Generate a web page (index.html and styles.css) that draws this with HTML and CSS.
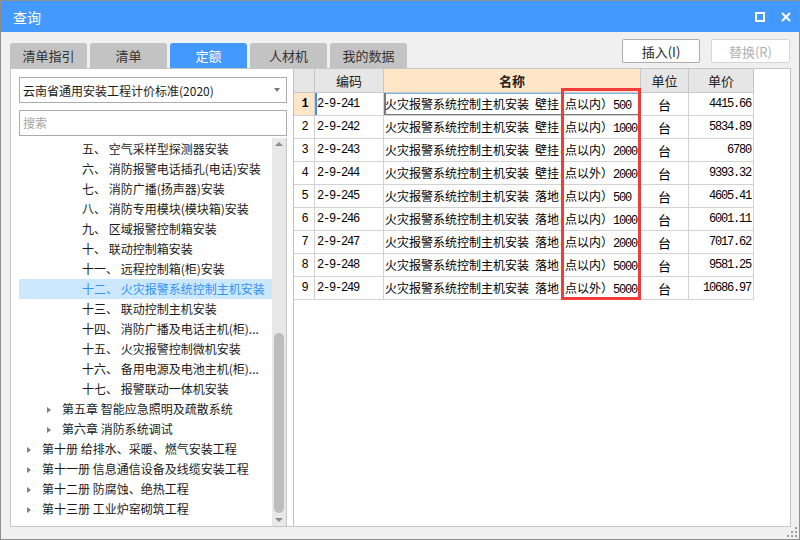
FILE: index.html
```html
<!DOCTYPE html>
<html lang="zh-CN">
<head>
<meta charset="utf-8">
<title>查询</title>
<link rel="stylesheet" href="styles.css">
</head>
<body>
<div class="window">
  <div class="titlebar">
    <span class="title">查询</span>
    <div class="win-ctrls">
      <svg class="ic" width="10" height="10" viewBox="0 0 10 10"><rect x="1" y="1" width="8" height="8" fill="none" stroke="#fff" stroke-width="2"/></svg>
      <svg class="ic" width="10" height="10" viewBox="0 0 10 10"><path d="M1 1 L9 9 M9 1 L1 9" stroke="#fff" stroke-width="2"/></svg>
    </div>
  </div>
  <div class="body">
    <div class="toolbar">
      <div class="tabs">
        <div class="tab">清单指引</div>
        <div class="tab">清单</div>
        <div class="tab active">定额</div>
        <div class="tab">人材机</div>
        <div class="tab">我的数据</div>
      </div>
      <div class="actions">
        <button class="btn">插入(I)</button>
        <button class="btn disabled">替换(R)</button>
      </div>
    </div>
    <div class="panel">
      <div class="left">
        <div class="select"><span>云南省通用安装工程计价标准(2020)</span><span class="caret"></span></div>
        <div class="search">搜索</div>
        <div class="tree">
          <div class="tree-list">
            <div class="node l3">五、 空气采样型探测器安装</div>
            <div class="node l3">六、 消防报警电话插孔(电话)安装</div>
            <div class="node l3">七、 消防广播(扬声器)安装</div>
            <div class="node l3">八、 消防专用模块(模块箱)安装</div>
            <div class="node l3">九、 区域报警控制箱安装</div>
            <div class="node l3">十、 联动控制箱安装</div>
            <div class="node l3">十一、 远程控制箱(柜)安装</div>
            <div class="node l3 sel">十二、 火灾报警系统控制主机安装</div>
            <div class="node l3">十三、 联动控制主机安装</div>
            <div class="node l3">十四、 消防广播及电话主机(柜)...</div>
            <div class="node l3">十五、 火灾报警控制微机安装</div>
            <div class="node l3">十六、 备用电源及电池主机(柜)...</div>
            <div class="node l3">十七、 报警联动一体机安装</div>
            <div class="node l2 kids">第五章 智能应急照明及疏散系统</div>
            <div class="node l2 kids">第六章 消防系统调试</div>
            <div class="node l1 kids">第十册 给排水、采暖、燃气安装工程</div>
            <div class="node l1 kids">第十一册 信息通信设备及线缆安装工程</div>
            <div class="node l1 kids">第十二册 防腐蚀、绝热工程</div>
            <div class="node l1 kids">第十三册 工业炉窑砌筑工程</div>
          </div>
          <div class="scrollbar">
            <div class="sb-btn"><span class="tri-up"></span></div>
            <div class="sb-track"><div class="thumb"></div></div>
            <div class="sb-btn"><span class="tri-down"></span></div>
          </div>
        </div>
      </div>
      <div class="right">
        <div class="grid">
          <div class="hd"></div>
          <div class="hd">编码</div>
          <div class="hd hd-name">名称</div>
          <div class="hd">单位</div>
          <div class="hd">单价</div>

          <div class="rn cur m">1</div>
          <div class="code m cur-code">2-9-241</div>
          <div class="name cur-name">火灾报警系统控制主机安装<span class="m">&nbsp;</span>壁挂<span class="m">(</span>点以内）<span class="m">500</span></div>
          <div class="unit">台</div>
          <div class="price m">4415.66</div>

          <div class="rn m">2</div>
          <div class="code m">2-9-242</div>
          <div class="name">火灾报警系统控制主机安装<span class="m">&nbsp;</span>壁挂<span class="m">(</span>点以内）<span class="m">1000</span></div>
          <div class="unit">台</div>
          <div class="price m">5834.89</div>

          <div class="rn m">3</div>
          <div class="code m">2-9-243</div>
          <div class="name">火灾报警系统控制主机安装<span class="m">&nbsp;</span>壁挂<span class="m">(</span>点以内）<span class="m">2000</span></div>
          <div class="unit">台</div>
          <div class="price m">6780</div>

          <div class="rn m">4</div>
          <div class="code m">2-9-244</div>
          <div class="name">火灾报警系统控制主机安装<span class="m">&nbsp;</span>壁挂<span class="m">(</span>点以外）<span class="m">2000</span></div>
          <div class="unit">台</div>
          <div class="price m">9393.32</div>

          <div class="rn m">5</div>
          <div class="code m">2-9-245</div>
          <div class="name">火灾报警系统控制主机安装<span class="m">&nbsp;</span>落地<span class="m">(</span>点以内）<span class="m">500</span></div>
          <div class="unit">台</div>
          <div class="price m">4605.41</div>

          <div class="rn m">6</div>
          <div class="code m">2-9-246</div>
          <div class="name">火灾报警系统控制主机安装<span class="m">&nbsp;</span>落地<span class="m">(</span>点以内）<span class="m">1000</span></div>
          <div class="unit">台</div>
          <div class="price m">6001.11</div>

          <div class="rn m">7</div>
          <div class="code m">2-9-247</div>
          <div class="name">火灾报警系统控制主机安装<span class="m">&nbsp;</span>落地<span class="m">(</span>点以内）<span class="m">2000</span></div>
          <div class="unit">台</div>
          <div class="price m">7017.62</div>

          <div class="rn m">8</div>
          <div class="code m">2-9-248</div>
          <div class="name">火灾报警系统控制主机安装<span class="m">&nbsp;</span>落地<span class="m">(</span>点以内）<span class="m">5000</span></div>
          <div class="unit">台</div>
          <div class="price m">9581.25</div>

          <div class="rn m">9</div>
          <div class="code m">2-9-249</div>
          <div class="name">火灾报警系统控制主机安装<span class="m">&nbsp;</span>落地<span class="m">(</span>点以外）<span class="m">5000</span></div>
          <div class="unit">台</div>
          <div class="price m">10686.97</div>
        </div>
        <div class="redbox"></div>
      </div>
    </div>
  </div>
  <svg class="grip" width="12" height="12" viewBox="0 0 12 12">
    <rect x="9" y="1" width="2" height="2" fill="#a0a0a0"/>
    <rect x="5" y="5" width="2" height="2" fill="#a0a0a0"/>
    <rect x="9" y="5" width="2" height="2" fill="#a0a0a0"/>
    <rect x="1" y="9" width="2" height="2" fill="#a0a0a0"/>
    <rect x="5" y="9" width="2" height="2" fill="#a0a0a0"/>
    <rect x="9" y="9" width="2" height="2" fill="#a0a0a0"/>
  </svg>
</div>
</body>
</html>
```
FILE: styles.css
```css
* { box-sizing: border-box; margin: 0; padding: 0; }
html, body { width: 800px; height: 540px; overflow: hidden; }
body {
  font-family: "Noto Sans CJK SC", "Microsoft YaHei", sans-serif;
  font-size: 12px;
  color: #1a1a1a;
  background: #f0f0f0;
}
.window {
  width: 800px;
  height: 540px;
  border: 1px solid #8f8f8f;
  background: #f0f0f0;
  display: flex;
  flex-direction: column;
  position: relative;
}
.titlebar {
  height: 31px;
  flex: none;
  background: #4499ff;
  color: #fff;
  display: flex;
  align-items: center;
  justify-content: space-between;
  padding: 0 8px 0 12px;
}
.title { font-size: 14px; }
.win-ctrls { display: flex; gap: 16px; align-items: center; }
.ic { display: block; }

.body {
  flex: 1;
  display: flex;
  flex-direction: column;
  padding: 0 8px 12px 9px;
}
.toolbar {
  height: 36px;
  flex: none;
  display: flex;
  justify-content: space-between;
}
.tabs { display: flex; gap: 3px; align-self: flex-end; }
.tab {
  width: 77px;
  height: 25px;
  line-height: 25px;
  text-align: center;
  font-size: 13px;
  color: #333;
  background: #c3c3c3;
  border-radius: 3px 3px 0 0;
}
.tab.active { background: #4499ff; color: #fff; }
.actions { display: flex; gap: 11px; margin-top: 7px; margin-right: 1px; align-self: flex-start; }
.btn {
  width: 78px;
  height: 24px;
  border: 1px solid #adadad;
  border-radius: 2px;
  background: #fff;
  font-family: inherit;
  font-size: 13px;
  color: #222;
}
.btn.disabled { width: 79px; border-color: #d6d6d6; color: #b0b0b0; }

.panel {
  height: 459px;
  flex: none;
  border: 1px solid #c6c6c6;
  background: #fff;
  display: flex;
}
.left {
  width: 276px;
  flex: none;
  padding: 8px 0 0 8px;
  display: flex;
  flex-direction: column;
}
.select {
  height: 26px;
  border: 1px solid #ababab;
  padding: 0 6px 0 3px;
  display: flex;
  align-items: center;
  justify-content: space-between;
  color: #1a1a1a;
}
.caret {
  width: 0; height: 0;
  border-left: 3.5px solid transparent;
  border-right: 3.5px solid transparent;
  border-top: 4px solid #7a7a7a;
}
.search {
  margin-top: 7px;
  height: 26px;
  border: 1px solid #ababab;
  padding-left: 3px;
  line-height: 24px;
  color: #a3a3a3;
}
.tree {
  margin-top: 2px;
  flex: 1;
  display: flex;
  border-right: 1px solid #c6c6c6;
  min-height: 0;
}
.tree-list { flex: 1; padding-top: 1px; overflow: hidden; }
.node { height: 20px; line-height: 20px; white-space: nowrap; color: #1a1a1a; }
.node.l3 { padding-left: 63px; }
.node.l2 { padding-left: 43px; }
.node.l1 { padding-left: 23px; }
.node.sel { background: #cce8ff; color: #3392f5; }
.node.kids::before {
  content: "";
  display: inline-block;
  width: 0; height: 0;
  border-left: 4px solid #808080;
  border-top: 3.5px solid transparent;
  border-bottom: 3.5px solid transparent;
  margin-left: -15px;
  margin-right: 11px;
  vertical-align: 1px;
}
.scrollbar {
  width: 14px;
  flex: none;
  background: #e8e8e8;
  display: flex;
  flex-direction: column;
  align-items: center;
}
.sb-btn { height: 12px; flex: none; display: flex; align-items: center; justify-content: center; }
.tri-up {
  width: 0; height: 0;
  border-left: 4px solid transparent;
  border-right: 4px solid transparent;
  border-bottom: 4px solid #8a8a8a;
}
.tri-down {
  width: 0; height: 0;
  border-left: 4px solid transparent;
  border-right: 4px solid transparent;
  border-top: 4px solid #8a8a8a;
}
.sb-track { flex: 1; display: flex; flex-direction: column; align-items: center; }
.thumb {
  margin-top: 183px;
  width: 10px;
  height: 180px;
  border-radius: 5px;
  background: #bdbdbd;
}

.right {
  flex: 1;
  margin-left: 6px;
  border-left: 1px solid #c0c0c0;
  position: relative;
}
.grid {
  display: grid;
  grid-template-columns: 21px 69px 257px 48px 65px;
  grid-template-rows: 24px repeat(9, 23px);
  width: 460px;
}
.grid > div {
  border-right: 1px solid #d2d2d2;
  border-bottom: 1px solid #d2d2d2;
  display: flex;
  align-items: center;
  white-space: nowrap;
  overflow: hidden;
  color: #000;
}
.grid > .hd {
  background: #e6e6e6;
  justify-content: center;
  font-size: 13px;
  color: #222;
  border-color: #c8c8c8;
}
.grid > .hd-name { background: #ffe6c9; font-weight: bold; }
.m {
  font-family: "Liberation Mono", monospace;
  font-size: 12px;
  letter-spacing: -1.2px;
}
.grid > .rn { justify-content: center; padding-left: 1px; }
.grid > .rn.cur { background: #ffe6c9; font-weight: bold; }
.grid > .code { padding-left: 2px; }
.grid > .cur-code { box-shadow: inset 2px 0 0 #4a90e2; }
.grid > .name { display: block; line-height: 22px; padding-left: 1px; }
.grid > .cur-name { box-shadow: inset 2px 0 0 #7a7a7a, inset 0 -1px 0 #7a7a7a, inset 0 1px 0 #7fb2ea; }
.grid > .unit { justify-content: center; font-size: 13px; }
.grid > .price { justify-content: flex-end; padding-right: 2px; }

.redbox {
  position: absolute;
  left: 267px;
  top: 19px;
  width: 80px;
  height: 212px;
  border: 3px solid #f23b3b;
}
.grip { position: absolute; right: 1px; bottom: 1px; }
```
